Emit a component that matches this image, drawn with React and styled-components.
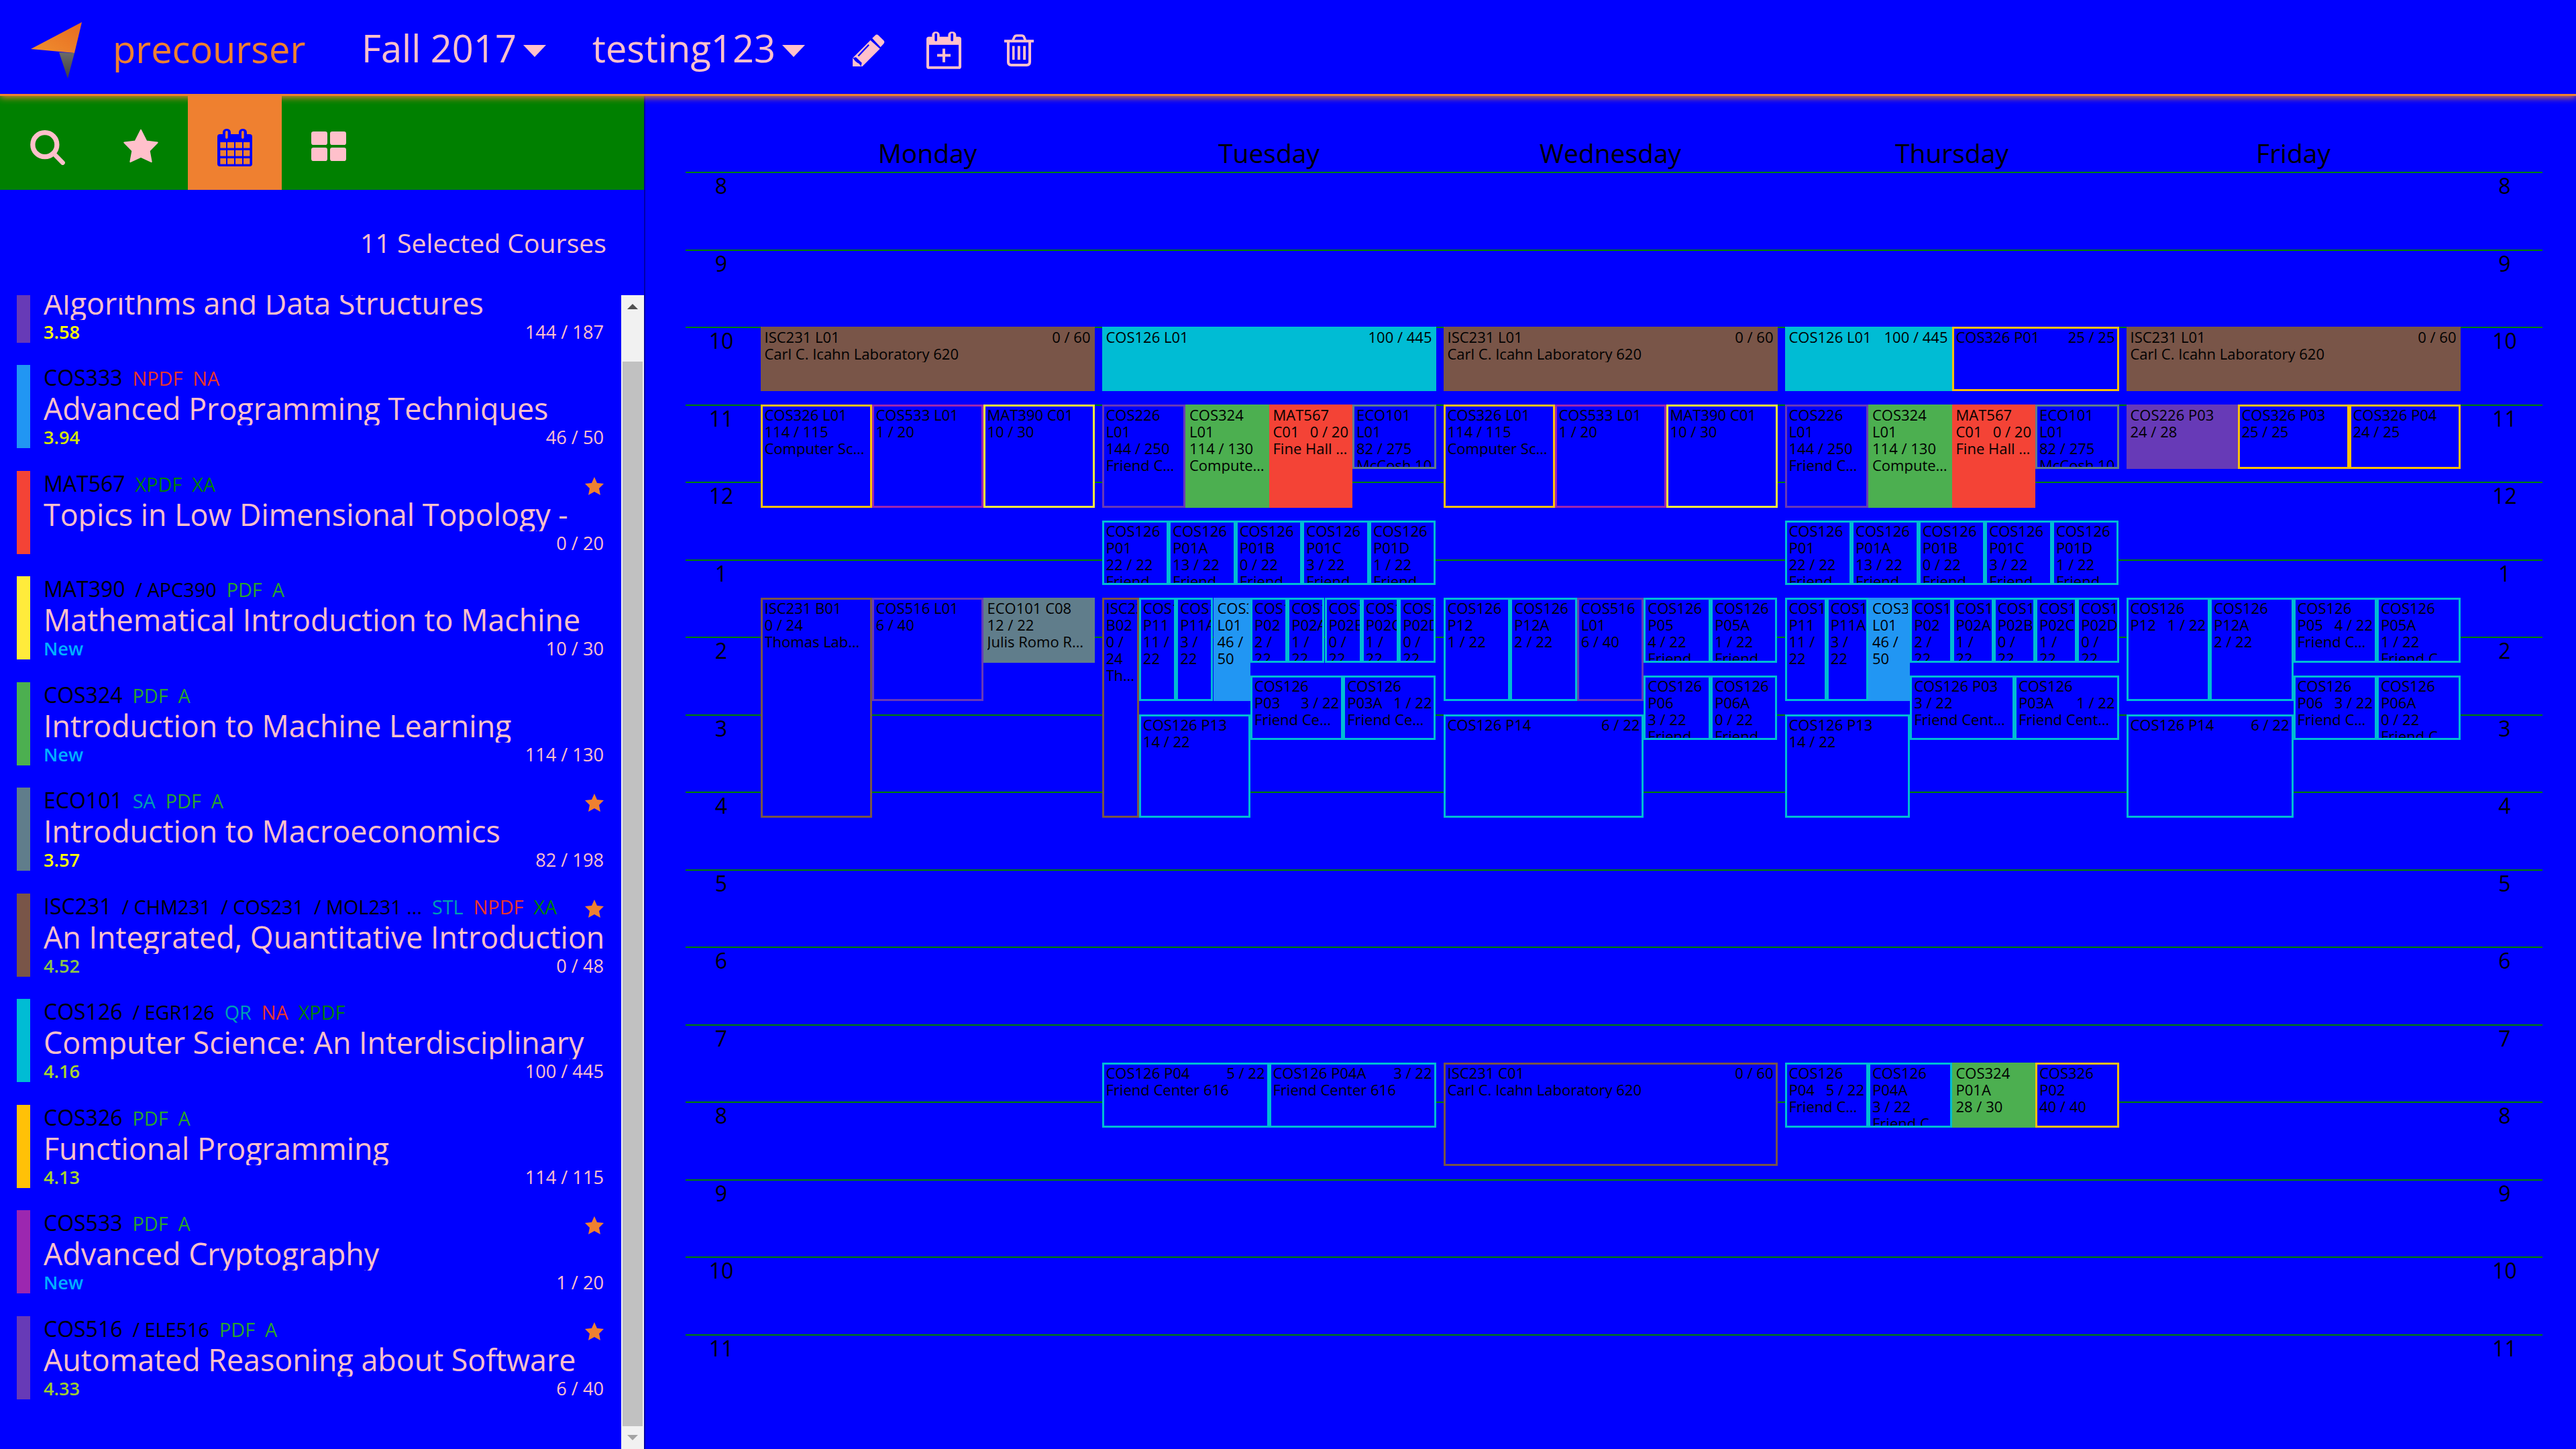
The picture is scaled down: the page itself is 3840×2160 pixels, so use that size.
import React from 'react';
import styled, { createGlobalStyle } from 'styled-components';

const PINK = '#ffc0cb';
const ORANGE = '#ef8030';
const HOUR = 115.5;

const BROWN = '#795548';
const CYAN = '#00bcd4';
const AMBER = '#ffc107';
const PURPLE = '#9c27b0';
const YELLOW = '#ffeb3b';
const DEEP = '#673ab7';
const GREEN = '#4caf50';
const RED = '#f44336';
const SLATE = '#607d8b';
const BLUE = '#2196f3';

const GlobalStyle = createGlobalStyle`
  html, body {
    margin: 0;
    height: 100%;
    background: #0000ff;
    font-family: "Open Sans", sans-serif;
    overflow: hidden;
  }
`;

const Page = styled.div`
  width: 3840px;
  height: 2160px;
  display: flex;
  flex-direction: column;
  background: #0000ff;
  overflow: hidden;
`;

const Header = styled.header`
  position: relative;
  z-index: 2;
  box-sizing: border-box;
  height: 143px;
  flex: none;
  display: flex;
  align-items: center;
  padding: 0 0 0 45px;
  border-bottom: 3px solid ${ORANGE};
  box-shadow: 0 2px 10px ${ORANGE};
`;

const Brand = styled.span`
  margin-left: 45px;
  margin-right: 88px;
  width: 283px;
  font-size: 56px;
  line-height: 70px;
  padding-top: 3px;
  color: ${ORANGE};
`;

const Menu = styled.span`
  display: flex;
  align-items: center;
  font-size: 56px;
  line-height: 70px;
  padding-top: 1px;
  color: ${PINK};
  margin-right: ${(p) => p.$gap}px;
`;

const Caret = styled.i`
  width: 0;
  height: 0;
  margin-left: 10px;
  margin-top: 10px;
  border-left: 17px solid transparent;
  border-right: 17px solid transparent;
  border-top: 18px solid ${PINK};
`;

const HeadIcon = styled.svg`
  display: block;
  flex: none;
  fill: ${PINK};
  margin-top: 10px;
  margin-right: ${(p) => p.$gap || 0}px;
`;

const Body = styled.div`
  flex: 1;
  display: flex;
  min-height: 0;
`;

const Sidebar = styled.aside`
  width: 960px;
  flex: none;
  display: flex;
  flex-direction: column;
  border-right: 2px solid #0000a8;
`;

const Toolbar = styled.nav`
  height: 140px;
  flex: none;
  display: flex;
  background: #008000;
`;

const Tab = styled.div`
  width: 140px;
  display: flex;
  align-items: center;
  justify-content: center;
  background: ${(p) => (p.$active ? ORANGE : 'transparent')};
`;

const Selected = styled.div`
  height: 157px;
  flex: none;
  box-sizing: border-box;
  padding: 54px 56px 0 0;
  text-align: right;
  font-size: 39.2px;
  line-height: 50px;
  color: ${PINK};
`;

const ListWrap = styled.div`
  flex: 1;
  min-height: 0;
  display: flex;
`;

const List = styled.div`
  flex: 1;
  overflow: hidden;
`;

const ListInner = styled.div`
  margin-top: -53.5px;
`;

const Course = styled.div`
  height: 124px;
  display: flex;
  margin-bottom: 33.5px;
  padding: 0 26px 0 25px;
`;

const ColorBar = styled.div`
  width: 20px;
  flex: none;
  background: ${(p) => p.$color};
`;

const CourseBody = styled.div`
  flex: 1;
  min-width: 0;
  padding-left: 20px;
  display: flex;
  flex-direction: column;
`;

const CodeRow = styled.div`
  height: 40px;
  display: flex;
  align-items: baseline;
  white-space: nowrap;
  line-height: 38px;
`;

const Code = styled.span`
  font-size: 32px;
  color: #000;
`;

const Cross = styled.span`
  font-size: 28.8px;
  color: #000;
  margin-left: 15px;
`;

const Tag = styled.span`
  font-size: 28.8px;
  color: ${(p) => p.$color};
  margin-left: 15px;
`;

const Fav = styled.svg`
  margin-left: auto;
  align-self: flex-start;
  margin-top: 9px;
  fill: ${ORANGE};
`;

const Title = styled.div`
  height: 50px;
  font-size: 44.8px;
  line-height: 50px;
  color: ${PINK};
  white-space: nowrap;
  overflow: hidden;
`;

const StatRow = styled.div`
  height: 34px;
  display: flex;
  justify-content: space-between;
  font-size: 27.2px;
  line-height: 36px;
  color: ${PINK};
`;

const Rating = styled.span`
  font-weight: 600;
  color: ${(p) => p.$color};
`;

const Rail = styled.div`
  width: 34px;
  flex: none;
  display: flex;
  flex-direction: column;
  align-items: center;
  background: #f1f1f1;
`;

const RailButton = styled.div`
  height: 34px;
  flex: none;
  width: 100%;
  display: flex;
  align-items: center;
  justify-content: center;
`;

const ArrowUp = styled.i`
  width: 0;
  height: 0;
  border-left: 8px solid transparent;
  border-right: 8px solid transparent;
  border-bottom: 8px solid #505050;
`;

const ArrowDown = styled.i`
  width: 0;
  height: 0;
  border-left: 8px solid transparent;
  border-right: 8px solid transparent;
  border-top: 8px solid #a3a3a3;
`;

const Thumb = styled.div`
  flex: 1;
  width: 30px;
  margin-top: 65px;
  background: #c1c1c1;
`;

const Main = styled.main`
  flex: 1;
  min-width: 0;
  padding-left: 60px;
`;

const DayRow = styled.div`
  width: 2768px;
  height: 113px;
  display: grid;
  grid-template-columns: 106px repeat(5, 509px) 117px;
  align-items: end;
`;

const DayName = styled.div`
  grid-column: ${(p) => p.$col};
  text-align: center;
  font-size: 39px;
  line-height: 48px;
  color: #000;
  padding-bottom: 4px;
`;

const Schedule = styled.div`
  position: relative;
  width: 2768px;
`;

const HourRow = styled.div`
  box-sizing: border-box;
  height: ${HOUR}px;
  display: flex;
  justify-content: space-between;
  border-top: 2px solid #008000;
`;

const HourLabel = styled.span`
  width: ${(p) => p.$width}px;
  text-align: center;
  font-size: 32px;
  line-height: 38px;
  color: #000;
`;

const EventLayer = styled.div`
  position: absolute;
  inset: 0;
  display: grid;
  grid-template-columns: 106px repeat(5, 509px) 117px;
`;

const DayColumn = styled.div`
  grid-column: ${(p) => p.$col};
  grid-row: 1;
  position: relative;
  margin: 0 5.5px;
`;

const Event = styled.div`
  position: absolute;
  box-sizing: border-box;
  padding: 0 3px;
  overflow: hidden;
  border: 3px solid ${(p) => p.$color};
  background: ${(p) => (p.$filled ? p.$color : '#0000ff')};
  font-size: 22px;
  line-height: 25px;
  color: #000;
`;

const EventLine = styled.div`
  display: flex;
  justify-content: space-between;
  white-space: nowrap;
`;

const EventPlace = styled.div`
  white-space: nowrap;
  overflow: hidden;
  text-overflow: ellipsis;
`;

const courses = [
  { code: 'COS226', title: 'Algorithms and Data Structures', color: DEEP, rating: '3.58', ratingColor: '#ffff00', seats: '144 / 187', tags: [] },
  { code: 'COS333', title: 'Advanced Programming Techniques', color: BLUE, rating: '3.94', ratingColor: '#d4e600', seats: '46 / 50', tags: [['NPDF', 'npdf'], ['NA', 'npdf']] },
  { code: 'MAT567', title: 'Topics in Low Dimensional Topology -', color: RED, seats: '0 / 20', fav: true, tags: [['XPDF', 'x'], ['XA', 'x']] },
  { code: 'MAT390', cross: ['/ APC390'], title: 'Mathematical Introduction to Machine', color: YELLOW, rating: 'New', ratingColor: '#00b0ff', seats: '10 / 30', tags: [['PDF', 'pdf'], ['A', 'pdf']] },
  { code: 'COS324', title: 'Introduction to Machine Learning', color: GREEN, rating: 'New', ratingColor: '#00b0ff', seats: '114 / 130', tags: [['PDF', 'pdf'], ['A', 'pdf']] },
  { code: 'ECO101', title: 'Introduction to Macroeconomics', color: SLATE, rating: '3.57', ratingColor: '#ffff00', seats: '82 / 198', fav: true, tags: [['SA', 'dist'], ['PDF', 'pdf'], ['A', 'pdf']] },
  { code: 'ISC231', cross: ['/ CHM231', '/ COS231', '/ MOL231 ...'], title: 'An Integrated, Quantitative Introduction', color: BROWN, rating: '4.52', ratingColor: '#8bc34a', seats: '0 / 48', fav: true, tags: [['STL', 'dist'], ['NPDF', 'npdf'], ['XA', 'x']] },
  { code: 'COS126', cross: ['/ EGR126'], title: 'Computer Science: An Interdisciplinary', color: CYAN, rating: '4.16', ratingColor: '#a9d62e', seats: '100 / 445', tags: [['QR', 'dist'], ['NA', 'npdf'], ['XPDF', 'x']] },
  { code: 'COS326', title: 'Functional Programming', color: AMBER, rating: '4.13', ratingColor: '#a9d62e', seats: '114 / 115', tags: [['PDF', 'pdf'], ['A', 'pdf']] },
  { code: 'COS533', title: 'Advanced Cryptography', color: PURPLE, rating: 'New', ratingColor: '#00b0ff', seats: '1 / 20', fav: true, tags: [['PDF', 'pdf'], ['A', 'pdf']] },
  { code: 'COS516', cross: ['/ ELE516'], title: 'Automated Reasoning about Software', color: DEEP, rating: '4.33', ratingColor: '#9ccc30', seats: '6 / 40', fav: true, tags: [['PDF', 'pdf'], ['A', 'pdf']] },
];

const tagColors = { npdf: '#e8352c', x: '#008000', pdf: '#2aa52a', dist: '#00a0b0' };

const ev = (start, end, col, span, cols, color, lines, place, filled) => ({ start, end, col, span, cols, color, lines, place, filled });

const M50 = 5 / 6;
const M80 = 4 / 3;

const lecture = () =>
  ev(10, 10 + M50, 0, 1, 1, BROWN, [['ISC231 L01', '0 / 60']], 'Carl C. Icahn Laboratory 620', true);

const thirds = [
  ev(11, 11 + M80, 0, 1, 3, AMBER, ['COS326 L01', '114 / 115'], 'Computer Science 104'),
  ev(11, 11 + M80, 1, 1, 3, PURPLE, ['COS533 L01', '1 / 20']),
  ev(11, 11 + M80, 2, 1, 3, YELLOW, ['MAT390 C01', '10 / 30']),
];

const fours = [
  ev(11, 11 + M80, 0, 1, 4, DEEP, ['COS226', 'L01', '144 / 250'], 'Friend Center 101'),
  ev(11, 11 + M80, 1, 1, 4, GREEN, ['COS324', 'L01', '114 / 130'], 'Computer Science 104', true),
  ev(11, 11 + M80, 2, 1, 4, RED, ['MAT567', ['C01', '0 / 20']], 'Fine Hall 314', true),
  ev(11, 11 + M50, 3, 1, 4, SLATE, ['ECO101', 'L01', '82 / 275'], 'McCosh 10'),
];

const noon = [['P01', '22 / 22'], ['P01A', '13 / 22'], ['P01B', '0 / 22'], ['P01C', '3 / 22'], ['P01D', '1 / 22']].map(([sec, n], i) =>
  ev(12.5, 12.5 + M50, i, 1, 5, CYAN, ['COS126', sec, n], 'Friend Center 109'));

// sections shared by tuesday and thursday, offset by the column count of that day
const afternoon = (x, cols) => [
  ev(13.5, 13.5 + M80, x, 1, cols, CYAN, ['COS126', 'P11', '11 /', '22']),
  ev(13.5, 13.5 + M80, x + 1, 1, cols, CYAN, ['COS126', 'P11A', '3 /', '22']),
  ev(13.5, 13.5 + M80, x + 2, 1, cols, BLUE, ['COS333', 'L01', '46 /', '50'], null, true),
  ...[['P02', '2 /'], ['P02A', '1 /'], ['P02B', '0 /'], ['P02C', '1 /'], ['P02D', '0 /']].map(([sec, n], i) =>
    ev(13.5, 13.5 + M50, x + 3 + i, 1, cols, CYAN, ['COS126', sec, n, '22'])),
  ev(15, 15 + M80, x, 3, cols, CYAN, ['COS126 P13', '14 / 22']),
];

const week = [
  [
    lecture(),
    ...thirds,
    ev(13.5, 13.5 + 17 / 6, 0, 1, 3, BROWN, ['ISC231 B01', '0 / 24'], 'Thomas Laboratory 003'),
    ev(13.5, 13.5 + M80, 1, 1, 3, DEEP, ['COS516 L01', '6 / 40']),
    ev(13.5, 13.5 + M50, 2, 1, 3, SLATE, ['ECO101 C08', '12 / 22'], 'Julis Romo Rabinowitz 399', true),
  ],
  [
    ev(10, 10 + M50, 0, 1, 1, CYAN, [['COS126 L01', '100 / 445']], null, true),
    ...fours,
    ...noon,
    ev(13.5, 13.5 + 17 / 6, 0, 1, 9, BROWN, ['ISC231', 'B02', '0 /', '24'], 'Thomas Lab'),
    ...afternoon(1, 9),
    ev(14.5, 14.5 + M50, 4, 2.5, 9, CYAN, ['COS126', ['P03', '3 / 22']], 'Friend Center 112'),
    ev(14.5, 14.5 + M50, 6.5, 2.5, 9, CYAN, ['COS126', ['P03A', '1 / 22']], 'Friend Center 112'),
    ev(19.5, 19.5 + M50, 0, 1, 2, CYAN, [['COS126 P04', '5 / 22']], 'Friend Center 616'),
    ev(19.5, 19.5 + M50, 1, 1, 2, CYAN, [['COS126 P04A', '3 / 22']], 'Friend Center 616'),
  ],
  [
    lecture(),
    ...thirds,
    ev(13.5, 13.5 + M80, 0, 1, 5, CYAN, ['COS126', 'P12', '1 / 22']),
    ev(13.5, 13.5 + M80, 1, 1, 5, CYAN, ['COS126', 'P12A', '2 / 22']),
    ev(13.5, 13.5 + M80, 2, 1, 5, DEEP, ['COS516', 'L01', '6 / 40']),
    ev(13.5, 13.5 + M50, 3, 1, 5, CYAN, ['COS126', 'P05', '4 / 22'], 'Friend Center 108'),
    ev(13.5, 13.5 + M50, 4, 1, 5, CYAN, ['COS126', 'P05A', '1 / 22'], 'Friend Center 108'),
    ev(14.5, 14.5 + M50, 3, 1, 5, CYAN, ['COS126', 'P06', '3 / 22'], 'Friend Center 108'),
    ev(14.5, 14.5 + M50, 4, 1, 5, CYAN, ['COS126', 'P06A', '0 / 22'], 'Friend Center 108'),
    ev(15, 15 + M80, 0, 3, 5, CYAN, [['COS126 P14', '6 / 22']]),
    ev(19.5, 19.5 + M80, 0, 1, 1, BROWN, [['ISC231 C01', '0 / 60']], 'Carl C. Icahn Laboratory 620'),
  ],
  [
    ev(10, 10 + M50, 0, 1, 2, CYAN, [['COS126 L01', '100 / 445']], null, true),
    ev(10, 10 + M50, 1, 1, 2, AMBER, [['COS326 P01', '25 / 25']]),
    ...fours,
    ...noon,
    ...afternoon(0, 8),
    ev(14.5, 14.5 + M50, 3, 2.5, 8, CYAN, ['COS126 P03', '3 / 22'], 'Friend Center 112'),
    ev(14.5, 14.5 + M50, 5.5, 2.5, 8, CYAN, ['COS126', ['P03A', '1 / 22']], 'Friend Center 112'),
    ev(19.5, 19.5 + M50, 0, 1, 4, CYAN, ['COS126', ['P04', '5 / 22']], 'Friend Center 616'),
    ev(19.5, 19.5 + M50, 1, 1, 4, CYAN, ['COS126', 'P04A', '3 / 22'], 'Friend Center 616'),
    ev(19.5, 19.5 + M50, 2, 1, 4, GREEN, ['COS324', 'P01A', '28 / 30'], null, true),
    ev(19.5, 19.5 + M50, 3, 1, 4, AMBER, ['COS326', 'P02', '40 / 40']),
  ],
  [
    lecture(),
    ev(11, 11 + M50, 0, 1, 3, DEEP, ['COS226 P03', '24 / 28'], null, true),
    ev(11, 11 + M50, 1, 1, 3, AMBER, ['COS326 P03', '25 / 25']),
    ev(11, 11 + M50, 2, 1, 3, AMBER, ['COS326 P04', '24 / 25']),
    ev(13.5, 13.5 + M80, 0, 1, 4, CYAN, ['COS126', ['P12', '1 / 22']]),
    ev(13.5, 13.5 + M80, 1, 1, 4, CYAN, ['COS126', 'P12A', '2 / 22']),
    ev(13.5, 13.5 + M50, 2, 1, 4, CYAN, ['COS126', ['P05', '4 / 22']], 'Friend Center 108'),
    ev(13.5, 13.5 + M50, 3, 1, 4, CYAN, ['COS126', 'P05A', '1 / 22'], 'Friend Center 108'),
    ev(14.5, 14.5 + M50, 2, 1, 4, CYAN, ['COS126', ['P06', '3 / 22']], 'Friend Center 108'),
    ev(14.5, 14.5 + M50, 3, 1, 4, CYAN, ['COS126', 'P06A', '0 / 22'], 'Friend Center 108'),
    ev(15, 15 + M80, 0, 2, 4, CYAN, [['COS126 P14', '6 / 22']]),
  ],
];

const dayNames = ['Monday', 'Tuesday', 'Wednesday', 'Thursday', 'Friday'];
const hours = [8, 9, 10, 11, 12, 1, 2, 3, 4, 5, 6, 7, 8, 9, 10, 11];

const LogoMark = styled.svg`
  display: block;
  flex: none;
  margin-top: 10px;
`;

const TabIcon = styled.svg`
  display: block;
  transform: translate(${(p) => p.$x}px, ${(p) => p.$y}px);
`;

const Logo = () => (
  <LogoMark width="78" height="86" viewBox="45 27 78 86">
    <defs>
      <linearGradient id="planeTop" x1="0" y1="1" x2="1" y2="0">
        <stop offset="0" stopColor="#ef9030" />
        <stop offset="1" stopColor="#e86a20" />
      </linearGradient>
      <linearGradient id="planeTail" x1="0" y1="0" x2="0" y2="1">
        <stop offset="0" stopColor="#6a6a6a" />
        <stop offset="1" stopColor="#404040" />
      </linearGradient>
    </defs>
    <polygon points="122,28 46,68 111,74" fill="url(#planeTop)" />
    <polygon points="88,73 111,74 101,112" fill="url(#planeTail)" />
  </LogoMark>
);

const PencilIcon = ({ gap }) => (
  <HeadIcon $gap={gap} width="48" height="48" viewBox="63 55 143 143">
    <path d="M150 73 L163 60 Q170 53 178 60 L200 82 Q208 90 200 98 L187 112 Z" />
    <path d="M64 160 L142 82 L184 120 L106 198 L64 198 Z" />
    <path d="M88 152 L135 102" stroke="#0000ff" strokeWidth="7" fill="none" />
    <path d="M64 160 L78 157 L104 182 L100 198 L92 186 L76 178 Z" fill="#0000ff" />
    <path d="M64 164 L64 198 L98 198 L92 190 L72 172 Z" />
  </HeadIcon>
);

const CalendarPlusIcon = ({ gap }) => (
  <HeadIcon $gap={gap} width="52" height="56" viewBox="393 43 156 167">
    <rect x="393" y="66" width="156" height="144" rx="11" />
    <rect x="418" y="43" width="34" height="50" rx="15" />
    <rect x="490" y="43" width="36" height="50" rx="15" />
    <rect x="430" y="50" width="11" height="36" rx="5" fill="#0000ff" />
    <rect x="502" y="50" width="11" height="36" rx="5" fill="#0000ff" />
    <rect x="405" y="102" width="132" height="96" fill="#0000ff" />
    <rect x="441" y="143" width="60" height="12" />
    <rect x="465" y="119" width="12" height="61" />
  </HeadIcon>
);

const TrashIcon = () => (
  <HeadIcon width="44" height="48" viewBox="741 53 133 145">
    <rect x="741" y="78" width="133" height="12" />
    <path d="M780 80 L788 63 Q791 59 797 59 L820 59 Q826 59 829 63 L836 80" fill="none" stroke="#ffc0cb" strokeWidth="11" />
    <path d="M759 88 L759 178 Q759 192 773 192 L842 192 Q856 192 856 178 L856 88" fill="none" stroke="#ffc0cb" strokeWidth="12" />
    <rect x="777" y="106" width="11" height="62" />
    <rect x="801" y="106" width="12" height="62" />
    <rect x="826" y="106" width="12" height="62" />
  </HeadIcon>
);

const SearchIcon = () => (
  <TabIcon $x={1} $y={7} width="52" height="52" viewBox="43 48 155 156">
    <circle cx="108" cy="113" r="54" fill="none" stroke="#ffc0cb" strokeWidth="22" />
    <path d="M155 160 L188 194" stroke="#ffc0cb" strokeWidth="20" strokeLinecap="round" />
  </TabIcon>
);

const StarIcon = () => (
  <TabIcon $x={0} $y={4} width="52" height="51" viewBox="462 38 156 150">
    <polygon
      points="540,42 565,92 614,98 578,135 587,184 540,162 493,184 502,135 466,98 515,92"
      fill="#ffc0cb"
      stroke="#ffc0cb"
      strokeWidth="6"
      strokeLinejoin="round"
    />
  </TabIcon>
);

const CalendarIcon = () => (
  <TabIcon $x={0} $y={7} width="52" height="56" viewBox="882 36 156 168">
    <rect x="882" y="60" width="156" height="144" rx="11" fill="#0000ff" />
    <rect x="906" y="36" width="36" height="50" rx="16" fill="#0000ff" />
    <rect x="978" y="36" width="36" height="50" rx="16" fill="#0000ff" />
    <rect x="918" y="45" width="11" height="35" rx="5" fill={ORANGE} />
    <rect x="990" y="45" width="11" height="35" rx="5" fill={ORANGE} />
    {[96, 132, 168].map((y) =>
      [[895, 26], [927, 30], [963, 30], [999, 28]].map(([x, w]) => (
        <rect key={`${x}-${y}`} x={x} y={y} width={w} height="26" fill={ORANGE} />
      )),
    )}
  </TabIcon>
);

const GridIcon = () => (
  <TabIcon $x={0} $y={5} width="52" height="44" viewBox="1302 48 156 132">
    {[48, 120].map((y) =>
      [1302, 1386].map((x) => <rect key={`${x}-${y}`} x={x} y={y} width="72" height="60" rx="10" fill="#ffc0cb" />),
    )}
  </TabIcon>
);

const SmallStar = () => (
  <Fav width="28" height="27" viewBox="0 0 28 27">
    <polygon points="14,0 18,9 28,10 21,17 23,27 14,22 5,27 7,17 0,10 10,9" />
  </Fav>
);

const CourseRow = ({ course }) => (
  <Course>
    <ColorBar $color={course.color} />
    <CourseBody>
      <CodeRow>
        <Code>{course.code}</Code>
        {(course.cross || []).map((c) => <Cross key={c}>{c}</Cross>)}
        {course.tags.map(([t, kind]) => <Tag key={t} $color={tagColors[kind]}>{t}</Tag>)}
        {course.fav && <SmallStar />}
      </CodeRow>
      <Title>{course.title}</Title>
      <StatRow>
        <Rating $color={course.ratingColor}>{course.rating}</Rating>
        <span>{course.seats}</span>
      </StatRow>
    </CourseBody>
  </Course>
);

const EventBox = ({ e }) => (
  <Event
    $color={e.color}
    $filled={e.filled}
    style={{
      top: (e.start - 8) * HOUR,
      height: (e.end - e.start) * HOUR,
      left: `${(e.col / e.cols) * 100}%`,
      width: `${(e.span / e.cols) * 100}%`,
    }}
  >
    {e.lines.map((line, i) => (
      <EventLine key={i}>
        {Array.isArray(line) ? <><span>{line[0]}</span><span>{line[1]}</span></> : line}
      </EventLine>
    ))}
    {e.place && <EventPlace>{e.place}</EventPlace>}
  </Event>
);

export default function App() {
  return (
    <Page>
      <GlobalStyle />
      <Header>
        <Logo />
        <Brand>precourser</Brand>
        <Menu $gap={69}>Fall 2017<Caret /></Menu>
        <Menu $gap={71}>testing123<Caret /></Menu>
        <PencilIcon gap={62} />
        <CalendarPlusIcon gap={64} />
        <TrashIcon />
      </Header>
      <Body>
        <Sidebar>
          <Toolbar>
            <Tab><SearchIcon /></Tab>
            <Tab><StarIcon /></Tab>
            <Tab $active><CalendarIcon /></Tab>
            <Tab><GridIcon /></Tab>
          </Toolbar>
          <Selected>11 Selected Courses</Selected>
          <ListWrap>
            <List>
              <ListInner>
                {courses.map((c) => <CourseRow key={c.code} course={c} />)}
              </ListInner>
            </List>
            <Rail>
              <RailButton><ArrowUp /></RailButton>
              <Thumb />
              <RailButton><ArrowDown /></RailButton>
            </Rail>
          </ListWrap>
        </Sidebar>
        <Main>
          <DayRow>
            {dayNames.map((d, i) => <DayName key={d} $col={i + 2}>{d}</DayName>)}
          </DayRow>
          <Schedule>
            {hours.map((h, i) => (
              <HourRow key={i}>
                <HourLabel $width={106}>{h}</HourLabel>
                <HourLabel $width={113}>{h}</HourLabel>
              </HourRow>
            ))}
            <EventLayer>
              {week.map((events, i) => (
                <DayColumn key={dayNames[i]} $col={i + 2}>
                  {events.map((e, j) => <EventBox key={j} e={e} />)}
                </DayColumn>
              ))}
            </EventLayer>
          </Schedule>
        </Main>
      </Body>
    </Page>
  );
}
